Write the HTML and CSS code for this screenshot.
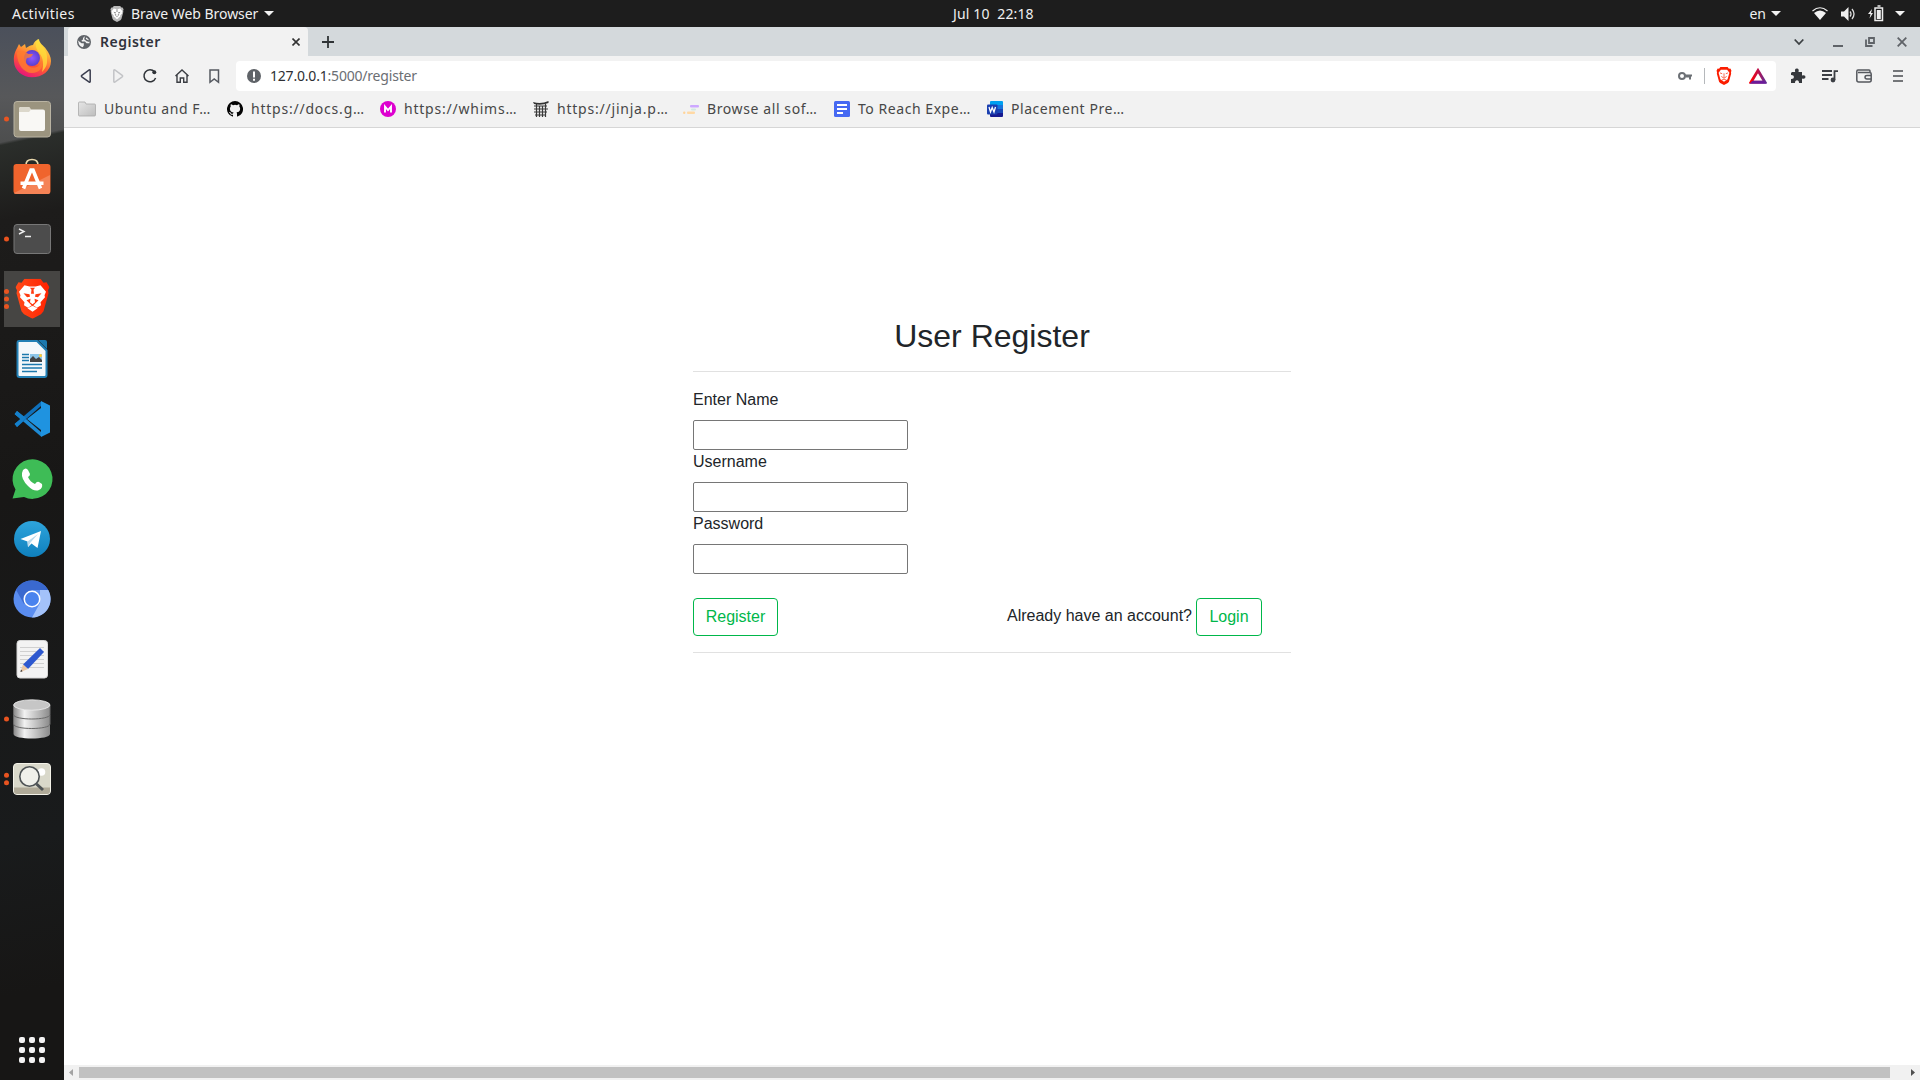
FILE: index.html
```
<!DOCTYPE html>
<html lang="en">
<head>
<meta charset="utf-8">
<title>Register</title>
<link rel="stylesheet" href="styles.css">
</head>
<body>
<svg class="defs" width="0" height="0" aria-hidden="true">
  <defs>
    <linearGradient id="fox" x1=".8" y1="0" x2=".3" y2="1"><stop offset="0" stop-color="#fff44f"/><stop offset=".35" stop-color="#ffa436"/><stop offset=".65" stop-color="#ff5634"/><stop offset="1" stop-color="#e6127e"/></linearGradient>
    <radialGradient id="globe"><stop offset="0" stop-color="#9059ff"/><stop offset="1" stop-color="#5b3fd0"/></radialGradient>
    <linearGradient id="brave" x1="0" x2="1"><stop offset="0" stop-color="#ff4b1a"/><stop offset="1" stop-color="#ff2200"/></linearGradient>
    <linearGradient id="metal" x1="0" x2="1"><stop offset="0" stop-color="#888"/><stop offset=".3" stop-color="#f2f2f2"/><stop offset="1" stop-color="#8a8a8a"/></linearGradient>
    <linearGradient id="tele" x1="0" x2="0" y1="0" y2="1"><stop offset="0" stop-color="#2ea4dc"/><stop offset="1" stop-color="#0f80bd"/></linearGradient>
    <linearGradient id="bat" x1="0" x2="1"><stop offset="0" stop-color="#ff0000"/><stop offset=".5" stop-color="#c0104a"/><stop offset="1" stop-color="#662d91"/></linearGradient>
    <linearGradient id="fold" x1="0" x2="1" y2="1"><stop offset="0" stop-color="#e6e6e6"/><stop offset="1" stop-color="#bdbdbd"/></linearGradient>
    <symbol id="lion" viewBox="0 0 34 40"><path d="M9 0h16l3 4 3-.5 3 5-1.500 3 .5 3-5 18-2.500 3-8.500 4.500-8.500-4.500-2.500-3L1 14.500l.5-3L0 8.500l3-5L6 4z"/></symbol>
    <symbol id="face" viewBox="0 0 34 40"><path d="M9 6.500l5 1.200h6l5-1.200 5.500 6.500-1.500 3.500.5 2-4.500 5 .5 3-4 2.500-4.500-3-4.500 3-4-2.500.5-3-4.500-5 .5-2L3.500 13zM12 29.500l5-2.500 5 2.500-5 3.500z"/><path class="cut" d="M8 14.500l6 1 .5 2.500-3 .5zM26 14.500l-6 1-.5 2.500 3 .5zM14.500 9l1.500 2-.5 4h3l-.5-4 1.500-2zM11 21.500l4-1.500-.5 3.500 2.500 2 2.500-2-.5-3.500 4 1.500-1.500 1.500-4.500 4.500-4.500-4.500z"/></symbol>
  </defs>
</svg>

<header class="topbar">
  <span class="activities">Activities</span>
  <svg class="app-icon" width="14" height="16" viewBox="0 0 34 40"><use href="#lion" fill="#b9b9b9"/><use href="#face" fill="#fff" color="#8a8a8a"/></svg>
  <span class="app-name">Brave Web Browser</span>
  <svg class="caret" width="10" height="6"><path d="M0 0h10L5 5z" fill="#f2f2f2"/></svg>
  <span class="clock">Jul 10&nbsp; 22:18</span>
  <div class="status">
    <span class="lang">en</span>
    <svg class="caret" width="10" height="6"><path d="M0 0h10L5 5z" fill="#f2f2f2"/></svg>
    <svg class="wifi" width="16" height="16"><path d="M.5 5Q8-1.500 15.500 5" fill="none" stroke="#eee" stroke-width="1.200"/><path d="M2 7Q8 2 14 7L8 14z" fill="#f4f4f4"/></svg>
    <svg class="sound" width="16" height="16"><path d="M1 5.500h3L8.500 1v14L4 10.500H1z" fill="#eee"/><path d="M10 5.500q2 2.500 0 5M12 3q4 5 0 10" fill="none" stroke="#ddd" stroke-width="1.300"/></svg>
    <svg class="battery" width="16" height="17"><path d="M4 4L0 9h2.500L1.500 13.500 5 8H3z" fill="#eee"/><path d="M7 3h7.500v12.500H7zM9.500 1h3" fill="none" stroke="#eee" stroke-width="1.500"/><path d="M8.800 5h4v9h-4z" fill="#eee"/></svg>
    <svg class="caret" width="10" height="6"><path d="M0 0h10L5 5z" fill="#f2f2f2"/></svg>
  </div>
</header>

<div class="desktop">
  <nav class="dock">
    <div class="app"><svg width="64" height="60"><path d="M14 33C13 24 17 20 19 15l2 3 4-3 1 4c3-2 5-3 7-3 1-3 3-5 6-6 0 4 5 7 7 10 3 4 5 8 5 12C51 42 42 48.300 32 48.300S14.500 41 14 33z" fill="url(#fox)"/><circle cx="32" cy="29" r="8" fill="url(#globe)"/><path d="M17 24c4-4 9-2 11 1h5c-1 3-4 4-6 4-2 3-1 7 3 9 6 2 11-1 12-7 2 8-3 13-10 13-8 0-15-8-15-20z" fill="#ff7d30" opacity=".8"/><path d="M38 10c0 5 11 9 9 23 0 4-3 8-5 10 2-8 1-14-2-18-4-5-6-10-2-15z" fill="#ffe03a" opacity=".75"/></svg></div>
    <div class="app"><svg width="64" height="60"><circle cx="6.500" cy="30" r="2.500" fill="#e95420"/><rect x="14" y="12.500" width="36.500" height="35.500" rx="3" fill="#9b947f" stroke="#b9b3a2"/><path d="M19 20q0-2 2-2h8l2 2.500h12q2 0 2 2V40q0 2-2 2H21q-2 0-2-2z" fill="#f9f8f5"/><path d="M19 23v-3q0-2 2-2h8l2 2.500-2 2.500z" fill="#dcd8cb"/></svg></div>
    <div class="app"><svg width="64" height="60"><path d="M26 17v-1q0-5.500 6-5.500t6 5.500v1" fill="none" stroke="#ead9ad" stroke-width="1.600"/><rect x="13.500" y="15" width="37" height="30" rx="3" fill="#f0642d"/><path d="M14 44L50 26v17q0 2-3 2H17q-3 0-3-1z" fill="#f58356"/><path d="M23.500 39.500L31 21h2l7.500 18.500" fill="none" stroke="#fff" stroke-width="3.600"/><path d="M20.500 32.500h23v3.500h-23z" fill="#fff"/></svg></div>
    <div class="app"><svg width="64" height="60"><circle cx="6.500" cy="30" r="2.500" fill="#e95420"/><rect x="14" y="15.500" width="36.500" height="29" rx="3" fill="#4c4c4c" stroke="#777"/><path d="M19 20l5 2.500-5 2.500M25 27.500h6" fill="none" stroke="#eee" stroke-width="1.400"/></svg></div>
    <div class="app active"><svg width="64" height="60"><g fill="#e95420"><circle cx="6.500" cy="22.500" r="2.500"/><circle cx="6.500" cy="30" r="2.500"/><circle cx="6.500" cy="37.500" r="2.500"/></g><use href="#lion" x="15.500" y="9.700" width="34" height="40" fill="url(#brave)"/><use href="#face" x="15.500" y="9.700" width="34" height="40" fill="#fff" color="#ff3a10"/></svg></div>
    <div class="app"><svg width="64" height="60"><path d="M19 12h18l9.500 9.500V46q0 2-2 2h-25q-2 0-2-2V14q0-2 1.500-2z" fill="#f4f8fb" stroke="#2380b5" stroke-width="2"/><path d="M38 11h7q2 0 2 2v7z" fill="#1c78ad"/><path d="M22 25.500h7M22 28.500h7M22 31.500h7M22 35.500h20M22 39h20M22 42.500h15" stroke="#1c78ad" stroke-width="1.300"/><path d="M30 25h12v8H30z" fill="#8cc5e8"/><path d="M30 33v-3l3-3 3 3 3-2 3 3v2z" fill="#444"/><circle cx="40.500" cy="26.500" r="1.500" fill="#fc3"/></svg></div>
    <div class="app"><svg width="64" height="60"><path d="M17 22L41 43v4.500L14.800 25.300z" fill="#1e8ad4"/><path d="M17 38L41 17v-4.500L14.800 34.700z" fill="#0f70bb"/><path d="M17 22l9 7-9 9-2.500-3 6-5-6-5z" fill="#1580cb"/><path d="M41 12l9 4.500v27L41 48V19L27 30l14 11z" fill="#1f93e0"/></svg></div>
    <div class="app"><svg width="64" height="60"><path d="M12.500 49.500l3-9A20 19.800 0 1 1 24 48z" fill="#3ebc56"/><path d="M23 21q3-3 5 0l2 4q0 2-2 3 2 5 7 7 2-3 4-2l3 2q1 4-3 6-5 2-11-4-7-7-6-13z" fill="#fff"/></svg></div>
    <div class="app"><svg width="64" height="60"><circle cx="32" cy="30" r="18" fill="url(#tele)"/><path d="M20.500 30L41 22l-3.500 17-6-4.500L28 38l-.5-5.500z" fill="#fff"/><path d="M27.500 32.500L38 25l-7.500 8.500L28 38z" fill="#b8d9ec"/></svg></div>
    <div class="app"><svg width="64" height="60"><circle cx="32" cy="30" r="18.500" fill="#5a8df0"/><path d="M16 20.800A18.500 18.500 0 0 1 48.200 21H32l-8 14z" fill="#3a69cf"/><path d="M48.300 21A18.500 18.500 0 0 1 32 48.500L40 34V21z" fill="#a3c2fa"/><circle cx="32" cy="30" r="8.500" fill="#fff"/><circle cx="32" cy="30" r="7" fill="#4a83ee"/></svg></div>
    <div class="app"><svg width="64" height="60"><rect x="17" y="11.500" width="30.500" height="37.500" rx="3" fill="#f3f3f3" stroke="#d5d5d5"/><path d="M20 18.500h24M20 22.500h24M20 26.500h24M20 30.500h24M20 34.500h24M20 38.500h24" stroke="#c7c7c7" stroke-width=".8"/><path d="M40 19l4 4-16 17-5-4.500z" fill="#2d58cf"/><path d="M23 35.500l5 4.500-7.500 3z" fill="#eac6a2"/><path d="M21 40.500l1.500 1.700-2 .8z" fill="#333"/></svg></div>
    <div class="app"><svg width="64" height="60"><circle cx="6.500" cy="30" r="2.500" fill="#e95420"/><path d="M13.500 36v9c0 6 36.500 6 36.500 0v-9z" fill="url(#metal)"/><path d="M13.500 26v9c0 6 36.500 6 36.500 0v-9z" fill="url(#metal)" stroke="#6a6a6a"/><path d="M13.500 16v9.500c0 6 36.500 6 36.500 0V16z" fill="url(#metal)" stroke="#6a6a6a"/><ellipse cx="31.800" cy="16" rx="18.200" ry="5.200" fill="#c6c6c6" stroke="#eee" stroke-width=".8"/></svg></div>
    <div class="app"><svg width="64" height="60"><g fill="#e95420"><circle cx="6.500" cy="26.200" r="2.500"/><circle cx="6.500" cy="33.700" r="2.500"/></g><rect x="13.500" y="14.500" width="37" height="31" rx="3.500" fill="#d9d8ca" stroke="#f3f2e8"/><path d="M14 38.500h36V42q0 3-3 3H17q-3 0-3-3z" fill="#b0aa98"/><circle cx="41.500" cy="23" r="3.800" fill="#fff"/><circle cx="29.500" cy="27.500" r="9.700" fill="#f0f0ea" stroke="#4e5355" stroke-width="1.600"/><path d="M36.500 35l6.500 6" stroke="#4e5355" stroke-width="3"/></svg></div>
    <div class="grid-btn"><svg width="26" height="26" fill="#f3f3f3"><g id="dots"><rect x="0" y="0" width="6" height="6" rx="2"/><rect x="10" y="0" width="6" height="6" rx="2"/><rect x="20" y="0" width="6" height="6" rx="2"/></g><use href="#dots" y="10"/><use href="#dots" y="20"/></svg></div>
  </nav>

  <main class="browser">
    <div class="tabstrip">
      <div class="tab">
        <svg width="14" height="14" viewBox="0 0 14 14"><circle cx="7" cy="7" r="7" fill="#5f6368"/><path d="M1 5.500l3.500 2.800h2.300v2.200l-1 1.800Q1.500 11 1.400 7zM7.500 1.400L6 3v1.500L4.500 5.500l.5 1h3l1.500 1.800h3q.3-5-5-6.900z" fill="#f2f2f2"/><path d="M8.500 1.800L8 4l2 1.500 2.500.8" fill="none" stroke="#5f6368" stroke-width="1.500"/></svg>
        <span class="tab-title">Register</span>
        <svg class="tab-close" width="8" height="8"><path d="M.5.5l7 7M7.500.5l-7 7" stroke="#333" stroke-width="1.600"/></svg>
      </div>
      <svg class="new-tab" width="12" height="12"><path d="M6 0v12M0 6h12" stroke="#2f3336" stroke-width="1.800"/></svg>
      <div class="window-controls">
        <svg width="10" height="10"><path d="M.7 2.500L5 7l4.300-4.500" fill="none" stroke="#3c4043" stroke-width="1.800"/></svg>
        <svg width="10" height="10"><path d="M0 9h10" stroke="#5f6368" stroke-width="2"/></svg>
        <svg width="10" height="10"><path d="M4 1h5v5H4zM1 2.500V9h6.500" fill="none" stroke="#5f6368" stroke-width="1.800"/></svg>
        <svg width="10" height="10"><path d="M.7.7l8.600 8.600M9.300.7L.7 9.300" stroke="#5f6368" stroke-width="1.800"/></svg>
      </div>
    </div>

    <div class="toolbar">
      <div class="nav-icons">
        <svg width="20" height="20"><path d="M14.200 4.500v11q0 1-1 .5L5.800 10.800q-.8-.8 0-1.500L13.200 4q1-.5 1 .5z" fill="none" stroke="#3b3e4f" stroke-width="1.500"/></svg>
        <svg width="20" height="20"><path d="M5.800 4.500v11q0 1 1 .5l7.400-5.200q.8-.8 0-1.500L6.800 4q-1-.5-1 .5z" fill="none" stroke="#c3c4c7" stroke-width="1.500"/></svg>
        <svg width="20" height="20"><path d="M14.500 5.800A6 6 0 1 0 15.600 12" fill="none" stroke="#2f3338" stroke-width="1.500"/><circle cx="14.300" cy="6.300" r="2" fill="#2f3338"/></svg>
        <svg width="20" height="20"><path d="M3.500 10L10 4l6.500 6M5 9v7.200h3.300V12h3.400v4.200H15V9" fill="none" stroke="#3b3e43" stroke-width="1.400"/></svg>
        <svg width="20" height="20"><path d="M6 4h8.500v12.300L10.200 13 6 16.300z" fill="none" stroke="#555960" stroke-width="1.500"/></svg>
      </div>
      <div class="urlbar">
        <svg width="14" height="14"><circle cx="7" cy="7" r="7" fill="#5f6368"/><path d="M7 2.500v6M7 9.700v2" stroke="#fff" stroke-width="2"/></svg>
        <span class="url"><b>127.0.0.1</b>:5000/register</span>
        <div class="url-actions">
          <svg width="14" height="10"><circle cx="4" cy="5" r="3" fill="none" stroke="#6c7075" stroke-width="2"/><path d="M7 4.500h7M12 4v4.500M8 5.500h5" stroke="#6c7075" stroke-width="2"/></svg>
          <span class="divider"></span>
          <svg class="shield" width="16" height="18" viewBox="0 0 34 40"><use href="#lion" fill="#fb1d00"/><path d="M10 6h14l5 7-4 14-8 6-8-6-4-14z" fill="#fff"/><path d="M8 13l5 2M26 13l-5 2M17 14v10M11 21l6 4 6-4M12 29l5-2 5 2" stroke="#fb5b40" fill="none" stroke-width="2"/></svg>
          <svg class="bat" width="18" height="16"><path d="M9 2.500L2 14.200h14z" fill="none" stroke="url(#bat)" stroke-width="2.800"/><path d="M.5 15.700h17l-3-3h-11z" fill="#6a1b9a"/></svg>
        </div>
      </div>
      <div class="ext-icons">
        <svg width="16" height="16"><path d="M2 4h3.200q-1-3.300 1.600-3.500T8.500 4H12v3.500q3.500-1 3.500 1.400T12 10.500V15H9q0-2.800-2-2.800T5 15H1v-4q3 .1 3-2T1 7V5z" fill="#35383c"/></svg>
        <svg width="16" height="16"><path d="M0 3h10M0 7h10M0 11h6.500M12.500 12V3.200H16" fill="none" stroke="#3c3f44" stroke-width="1.800"/><circle cx="11" cy="12" r="2.400" fill="#3c3f44"/></svg>
        <svg width="16" height="16"><path d="M14 4.500V3q0-1-1-1H2Q.8 2 .8 3.500V12q0 2 2 2h10.400q2 0 2-2V6q0-1.500-1.500-1.500H2M15 7.500h-4q-2 0-2 1.700t2 1.700h4" fill="none" stroke="#55585e" stroke-width="1.500"/></svg>
        <svg width="16" height="16"><path d="M3 3h10M3 8h10M3 13h10" stroke="#4b4e52" stroke-width="1.700"/></svg>
      </div>
    </div>

    <div class="bookmarks">
      <a class="bm folder"><svg width="18" height="16"><path d="M.5 2q0-1 1-1H7l1 2h8.500q1 0 1 1v10q0 1-1 1h-15q-1 0-1-1z" fill="url(#fold)" stroke="#aaa" stroke-width=".8"/></svg><span>Ubuntu and F…</span></a>
      <a class="bm link"><svg width="16" height="16" viewBox="0 0 16 16"><path d="M8 0a8 8 0 0 0-2.530 15.590c.4.070.55-.17.55-.38v-1.490c-2.010.37-2.530-.49-2.690-.94-.09-.23-.48-.94-.82-1.130-.28-.15-.68-.52-.01-.53.630-.01 1.080.58 1.230.82.720 1.210 1.870.87 2.330.66.070-.52.280-.87.510-1.070-1.780-.2-3.640-.89-3.640-3.950 0-.87.310-1.590.82-2.150-.08-.2-.36-1.020.08-2.120 0 0 .67-.21 2.200.82a7.600 7.600 0 0 1 4 0c1.530-1.040 2.200-.82 2.200-.82.440 1.100.16 1.920.08 2.120.51.560.82 1.270.82 2.150 0 3.070-1.870 3.750-3.650 3.950.29.250.54.730.54 1.480v2.200c0 .21.150.46.550.38A8 8 0 0 0 8 0z" fill="#050505"/></svg><span>https://docs.g…</span></a>
      <a class="bm link"><svg width="16" height="16"><circle cx="8" cy="8" r="8" fill="#dd00cf"/><path d="M5 11.500v-6l3 3.500 3-3.500v6" fill="none" stroke="#fff" stroke-width="1.900"/></svg><span>https://whims…</span></a>
      <a class="bm link short"><svg width="16" height="16"><path d="M1 5h13M3.500 2.500V16M12.500 2.500V16M1 8h14M1 11h13M6.500 5v11M9.500 5v11M2 14h11" fill="none" stroke="#3a3a3a" stroke-width="1.200"/><path d="M0 1Q8 3.500 15.500 0v2Q8 5 1 3z" fill="#333"/></svg><span>https://jinja.p…</span></a>
      <a class="bm browse"><svg width="16" height="16"><rect x="7" y="4" width="9" height="2.500" rx="1" fill="#cda8ff"/><rect x="8" y="7.500" width="5" height="2" rx="1" fill="#cfe9df"/><rect x="4" y="10.500" width="8" height="2.500" rx="1" fill="#ffd9a5"/><circle cx="1.200" cy="11.700" r="1.200" fill="#ffd49a"/></svg><span>Browse all sof…</span></a>
      <a class="bm"><svg width="16" height="16"><rect width="16" height="16" rx="1.500" fill="#4669f2"/><path d="M3 4h10M3 8h10M3 12h6" stroke="#fff" stroke-width="1.800"/></svg><span>To Reach Expe…</span></a>
      <a class="bm"><svg width="16" height="16"><path d="M4 0h11q1 0 1 1v3H3V1q0-1 1-1z" fill="#00a0f0"/><path d="M3 4h13v4H3z" fill="#1874dc"/><path d="M3 8h13v4H3z" fill="#1848b8"/><path d="M3 12h13v3q0 1-1 1H4q-1 0-1-1z" fill="#161a90"/><rect y="3.500" width="10.500" height="10" rx="1" fill="#1a3fb0"/><path d="M2 6l1.500 5L5.200 6.500 7 11l1.500-5" fill="none" stroke="#fff" stroke-width="1.300"/></svg><span>Placement Pre…</span></a>
    </div>

    <div class="page">
      <form class="register">
        <h2>User Register</h2>
        <hr>
        <label for="name">Enter Name</label>
        <input id="name" type="text">
        <label for="username">Username</label>
        <input id="username" type="text">
        <label for="password">Password</label>
        <input id="password" type="password">
        <div class="actions">
          <button type="button" class="btn btn-register">Register</button>
          <div class="login"><span>Already have an account?</span><a class="btn btn-login">Login</a></div>
        </div>
        <hr>
      </form>
    </div>

    <div class="scrollbar">
      <svg width="15" height="15"><path d="M9 4v7L5 7.500z" fill="#a3a3a3"/></svg>
      <div class="thumb"></div>
      <svg class="arrow-right" width="15" height="15"><path d="M6 4v7l4-3.500z" fill="#505050"/></svg>
    </div>
  </main>
</div>
</body>
</html>
```
FILE: styles.css
```
* { box-sizing: border-box; }
body { margin: 0; width: 1920px; height: 1080px; overflow: hidden; background: #fff; font-family: "Noto Sans", "Open Sans", sans-serif; font-size: 14px; display: flex; flex-direction: column; }
svg { display: block; flex: none; }
.defs { position: absolute; }
.cut { fill: currentColor; }
span { white-space: nowrap; }

.topbar { display: flex; align-items: center; height: 27px; flex: none; background: #1d1d1d; color: #f0f0f0; padding: 0 15px 0 12px; }
.topbar span { padding-bottom: 1px; }
.activities { width: 98px; letter-spacing: .45px; }
.app-icon { margin-right: 7px; }
.app-name { width: 133px; letter-spacing: -.05px; }
.clock { margin-left: 679px; letter-spacing: .15px; }
.status { display: flex; align-items: center; margin-left: auto; }
.lang { margin-right: 5px; }
.wifi { margin-left: 31px; }
.sound { margin-left: 12px; }
.battery { margin: 0 11px 0 12px; }

.desktop { display: flex; flex: 1; min-height: 0; }
.dock { width: 64px; flex: none; display: flex; flex-direction: column; padding-top: 2px; background: linear-gradient(168deg, transparent 113px, #2b2e2b 116px, #1d1c1b 190px, #181716 460px, #191b1c 800px, #171615 950px), linear-gradient(#4b505b, #57585a 70px, #4c4d4d 120px); }
.app { height: 60px; flex: none; }
.active { background: linear-gradient(#464543, #464543) 4px 2px / 56px 56px no-repeat; }
.grid-btn { margin-top: auto; padding: 0 0 17px 19px; }

.browser { flex: 1; display: flex; flex-direction: column; min-width: 0; background: #f2f2f2; }
.tabstrip { height: 29px; display: flex; align-items: center; background: #d4d9dc; padding: 0 13px 0 4px; flex: none; }
.tab { display: flex; align-items: center; width: 240px; height: 29px; padding: 0 8px 0 9px; background: #f2f2f2; border-radius: 4px 4px 0 0; }
.tab-title { margin-left: 9px; font-weight: 600; letter-spacing: .5px; color: #30323c; }
.tab-close { margin-left: auto; }
.new-tab { margin-left: 14px; }
.window-controls { display: flex; margin-left: auto; gap: 22px; }
.window-controls svg:first-child { margin-right: 7px; }

.toolbar { height: 40px; flex: none; display: flex; align-items: center; padding: 0 14px 0 12px; }
.nav-icons { display: flex; gap: 12px; }
.urlbar { display: flex; align-items: center; width: 1540px; height: 30px; margin-left: 12px; padding: 0 9px 0 11px; background: #fff; border-radius: 4px; }
.url { margin-left: 9px; padding-bottom: 1px; color: #6b6e73; letter-spacing: -.2px; }
.url b { font-weight: 400; color: #2d2f33; }
.url-actions { display: flex; align-items: center; margin-left: auto; }
.divider { width: 1px; height: 16px; background: #b5b8bb; margin: 0 11px 0 12px; }
.bat { margin-left: 17px; }
.ext-icons { display: flex; margin-left: auto; gap: 18px; }
.ext-icons svg:first-child { margin-right: -2px; }

.bookmarks { height: 32px; flex: none; display: flex; align-items: flex-start; padding: 5px 0 0 14px; border-bottom: 1px solid #d6d6d6; color: #474747; }
.bm { display: flex; align-items: center; flex: none; width: 153px; height: 16px; gap: 8px; letter-spacing: .55px; }
.bm span { padding-bottom: 2px; }
.bm.folder { width: 149px; }
.bm.link { letter-spacing: .78px; }
.bm.short { width: 150px; }
.bm.browse { width: 151px; letter-spacing: .6px; }

.page { flex: 1; background: #fff; min-height: 0; padding: 189px 0 0 629px; font-family: "Liberation Sans", Arial, sans-serif; font-size: 16px; line-height: 24px; color: #212529; }
.register { width: 598px; }
.register h2 { margin: 0 0 16px; font-size: 32px; font-weight: 400; line-height: 38px; text-align: center; }
.register hr { margin: 0 0 16px; border: 0; border-top: 1px solid #e1e1e1; }
.register label { display: block; margin-bottom: 8px; }
.register input { display: block; width: 215px; height: 30px; border: 1px solid #767676; border-radius: 2px; outline: 0; background: #fff; }
.actions { display: flex; justify-content: space-between; margin: 24px 0 16px; padding-right: 29px; }
.login { display: flex; gap: 4px; }
.login span { padding-top: 6px; }
.btn { height: 38px; padding: 6px 0; text-align: center; border: 1px solid #00b74a; border-radius: 4px; background: #fff; color: #00b74a; font: 16px/24px "Liberation Sans", Arial, sans-serif; }
.btn-register { width: 85px; }
.btn-login { width: 66px; }

.scrollbar { display: flex; align-items: center; height: 15px; flex: none; background: #f1f1f1; }
.thumb { width: 1811px; height: 11px; background: #c1c1c1; }
.arrow-right { margin-left: auto; }
```
